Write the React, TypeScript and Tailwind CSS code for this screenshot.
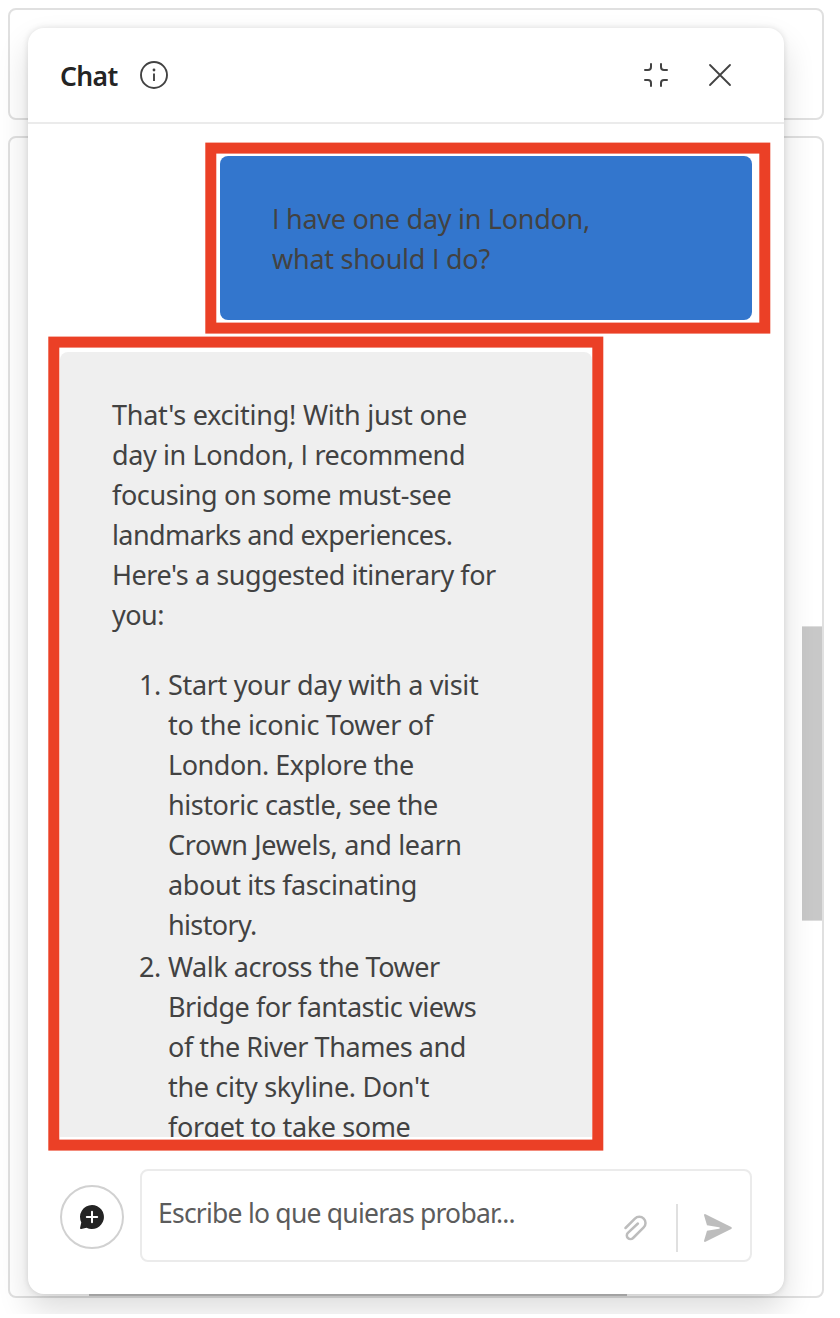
import React from "react";

type Line = { text: string; tracking: string };

const question: Line[] = [
  { text: "I have one day in London,", tracking: "tracking-[-0.28px]" },
  { text: "what should I do?", tracking: "tracking-[-0.26px]" },
];

const intro: Line[] = [
  { text: "That's exciting! With just one", tracking: "tracking-[-0.24px]" },
  { text: "day in London, I recommend", tracking: "tracking-[-0.38px]" },
  { text: "focusing on some must-see", tracking: "tracking-[-0.39px]" },
  { text: "landmarks and experiences.", tracking: "tracking-[-0.6px]" },
  { text: "Here's a suggested itinerary for", tracking: "tracking-[-0.44px]" },
  { text: "you:", tracking: "tracking-[-0.5px]" },
];

const steps: Line[][] = [
  [
    { text: "Start your day with a visit", tracking: "tracking-[-0.33px]" },
    { text: "to the iconic Tower of", tracking: "tracking-[-0.27px]" },
    { text: "London. Explore the", tracking: "tracking-[-0.47px]" },
    { text: "historic castle, see the", tracking: "tracking-[-0.43px]" },
    { text: "Crown Jewels, and learn", tracking: "tracking-[-0.35px]" },
    { text: "about its fascinating", tracking: "tracking-[-0.4px]" },
    { text: "history.", tracking: "tracking-[-0.65px]" },
  ],
  [
    { text: "Walk across the Tower", tracking: "tracking-[-0.45px]" },
    { text: "Bridge for fantastic views", tracking: "tracking-[-0.46px]" },
    { text: "of the River Thames and", tracking: "tracking-[-0.43px]" },
    { text: "the city skyline. Don't", tracking: "tracking-[-0.33px]" },
    { text: "forget to take some", tracking: "tracking-[-0.37px]" },
  ],
];

// Noto Sans draws a serifed capital I; Open Sans supplies the plain one.
function Lines({ lines }: { lines: Line[] }) {
  return (
    <>
      {lines.map((l) => (
        <span key={l.text} className={`block h-10 whitespace-nowrap ${l.tracking}`}>
          {l.text.split(/(\bI\b)/).map((part, i) =>
            part === "I" ? (
              <span key={i} className="font-['Open_Sans',sans-serif]">I</span>
            ) : (
              part
            ),
          )}
        </span>
      ))}
    </>
  );
}

function Header() {
  return (
    <header className="flex h-24 shrink-0 items-center border-b-2 border-[#ebebeb] pl-8 pr-[52px]">
      <h1 className="w-20 whitespace-nowrap pt-[3px] text-[26.5px] font-semibold tracking-[-0.6px] text-[#242424]">Chat</h1>
      <svg width="28" height="28" viewBox="0 0 28 28" fill="none" stroke="#424242" strokeWidth="1.9">
        <circle cx="14" cy="14" r="13" />
        <path d="M14 12.6v7.4" />
        <circle cx="14" cy="9" r="1.4" fill="#424242" stroke="none" />
      </svg>
      <svg className="ml-auto" width="24" height="24" viewBox="0 0 24 24" fill="none" stroke="#424242" strokeWidth="2" strokeLinecap="round">
        <path d="M7 1v3a3 3 0 0 1-3 3H1M17 1v3a3 3 0 0 0 3 3h3M7 23v-3a3 3 0 0 0-3-3H1M17 23v-3a3 3 0 0 1 3-3h3" />
      </svg>
      <svg className="ml-10" width="24" height="24" viewBox="0 0 24 24" fill="none" stroke="#424242" strokeWidth="1.8" strokeLinecap="round">
        <path d="M2 2l20 20M22 2L2 22" />
      </svg>
    </header>
  );
}

function Composer() {
  return (
    <footer className="flex h-[157px] shrink-0 items-start gap-4 px-8 pt-8">
      <button className="mt-4 flex size-16 items-center justify-center rounded-full border-2 border-[#d1d1d1]">
        <svg width="24" height="24" viewBox="0 0 24 24">
          <path d="M12 0a12 12 0 1 1-5.5 22.7L1.3 24A1 1 0 0 1 .1 22.7l1.2-5.3A12 12 0 0 1 12 0Z" fill="#242424" />
          <path d="M12 6.8v10.4M6.8 12h10.4" stroke="#fff" strokeWidth="2" strokeLinecap="round" />
        </svg>
      </button>
      <div className="flex h-[93px] w-[612px] rounded-lg border-2 border-[#ebebeb] pl-4">
        <p className="w-[464px] whitespace-nowrap pt-[22px] text-[26.5px] leading-10 tracking-[-0.77px] text-[#5c5c5c]">Escribe lo que quieras probar...</p>
        <svg className="mt-[43px] shrink-0" width="28" height="28" viewBox="0 0 28 28" fill="none" stroke="#bdbdbd" strokeWidth="2.5" strokeLinecap="round" strokeLinejoin="round">
          <path d="M3.5 14 12.9 4.6a6.2 6.2 0 0 1 8.8 8.8L11.1 24a3.65 3.65 0 0 1-5.2-5.2L15.9 9.5" />
        </svg>
        <div className="ml-[26px] mt-[33px] h-12 w-0.5 shrink-0 bg-[#e0e0e0]" />
        <svg className="ml-[26px] mt-[43px] shrink-0" width="28" height="28" viewBox="0 0 28 28">
          <path d="M1.5.15 27.2 13a1.1 1.1 0 0 1 0 2L1.5 27.85A1 1 0 0 1 .1 26.6L3 16.8l12-2a.8.8 0 0 0 0-1.6l-12-2L.1 1.4A1 1 0 0 1 1.5.15Z" fill="#bdbdbd" />
        </svg>
      </div>
    </footer>
  );
}

export default function App() {
  return (
    <div className="h-[1318px] bg-white font-['Noto_Sans',sans-serif]">
      <div className="relative flex h-[1314px] flex-col gap-4 overflow-hidden px-2 pt-2">
        <div className="h-28 w-[816px] rounded-lg border-2 border-[#e0e0e0]" />
        <div className="flex h-[1162px] w-[816px] flex-col justify-between rounded-lg border-2 border-[#e0e0e0]">
          <div className="mt-[488px] h-[295px] w-5 self-end border-y border-[#ddd] bg-[#c8c8c8]" />
          <div className="ml-[79px] h-1 w-[538px] bg-[#c1c1c1]" />
        </div>

        <section className="absolute left-7 top-7 flex h-[1266px] w-[756px] flex-col rounded-2xl bg-white shadow-[0_16px_32px_rgba(0,0,0,0.14),0_0_6px_rgba(0,0,0,0.12)]">
          <Header />
          <main className="flex h-[1013px] flex-col overflow-hidden px-8 pt-8 text-[27px] leading-10 text-[#424242]">
            <div className="h-[164px] w-[532px] shrink-0 self-end rounded-lg bg-[#3376cd] pl-[52px] pt-[43px]">
              <Lines lines={question} />
            </div>
            <div className="mt-8 h-[785px] w-[532px] shrink-0 overflow-hidden rounded-t-lg bg-[#efefef] pl-[52px] pt-[43px]">
              <Lines lines={intro} />
              <ol className="mt-[30px] flex flex-col gap-0.5">
                {steps.map((s, i) => (
                  <li key={i} className="flex">
                    <span className="w-14 pl-[27px] tracking-[-0.5px]">{i + 1}.</span>
                    <div>
                      <Lines lines={s} />
                    </div>
                  </li>
                ))}
              </ol>
            </div>
          </main>
          <Composer />
        </section>

        <div className="absolute left-[205px] top-[142px] h-[191px] w-[565px] translate-x-[0.3px] translate-y-[0.6px] border-[11px] border-[#eb4026]" />
        <div className="absolute left-[48px] top-[336px] h-[814px] w-[555px] translate-x-[0.3px] translate-y-[0.6px] border-[11px] border-[#eb4026]" />
      </div>
    </div>
  );
}
